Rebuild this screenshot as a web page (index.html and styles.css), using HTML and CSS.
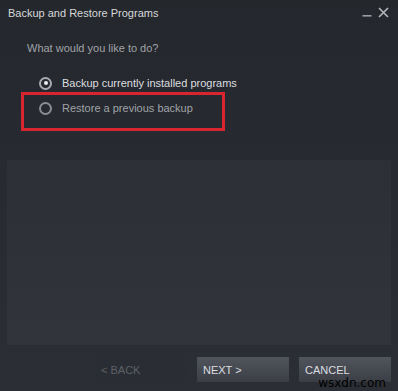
FILE: index.html
```
<!DOCTYPE html>
<html>
<head>
<meta charset="utf-8">
<link rel="stylesheet" href="styles.css">
</head>
<body>
<div class="win">
  <div class="titlebar">
    <span class="title">Backup and Restore Programs</span>
    <div class="controls">
      <svg class="ctl" width="10" height="10" viewBox="0 0 10 10"><rect x="0.5" y="7" width="9" height="1.6" fill="#9a9da2"/></svg>
      <svg class="ctl" width="11" height="11" viewBox="0 0 11 11"><path d="M1 1 L10 10 M10 1 L1 10" stroke="#b4b7bb" stroke-width="1.6"/></svg>
    </div>
  </div>
  <div class="question">What would you like to do?</div>
  <div class="options">
    <label class="opt">
      <span class="radio on"></span>
      <span class="label bright">Backup currently installed programs</span>
    </label>
    <label class="opt highlight">
      <span class="radio"></span>
      <span class="label">Restore a previous backup</span>
    </label>
  </div>
  <div class="panel"></div>
  <div class="buttons">
    <div class="btn disabled">&lt; BACK</div>
    <div class="btn primary">NEXT &gt;</div>
    <div class="btn">CANCEL</div>
  </div>
  <div class="watermark">wsxdn.com</div>
</div>
</body>
</html>
```
FILE: styles.css
```
html, body {
  margin: 0;
  padding: 0;
}
body {
  width: 398px;
  height: 391px;
  overflow: hidden;
  font-family: "Liberation Sans", Arial, sans-serif;
}
.win {
  position: relative;
  width: 398px;
  height: 391px;
  background: linear-gradient(to bottom, #24272c 0%, #272a30 40%, #2b2e34 100%);
  display: flex;
  flex-direction: column;
}
.titlebar {
  height: 25px;
  display: flex;
  align-items: center;
  justify-content: space-between;
  padding: 0 9px 0 8px;
}
.title {
  color: #d6d8da;
  font-size: 11px;
  padding-top: 1px;
}
.controls {
  display: flex;
  align-items: center;
  gap: 6px;
}
.ctl {
  display: block;
}
.question {
  margin: 17px 0 0 27px;
  color: #a0a3a8;
  font-size: 11px;
  height: 13px;
}
.options {
  margin: 17px 0 0 21px;
  display: flex;
  flex-direction: column;
  width: 204px;
}
.opt {
  display: flex;
  align-items: center;
  height: 22px;
  padding-left: 18px;
}
.highlight {
  border: 3px solid #d8252f;
  height: 39px;
  box-sizing: border-box;
  padding-left: 15px;
  padding-bottom: 7px;
  margin-top: -2px;
}
.radio {
  width: 13px;
  height: 13px;
  border: 2px solid #8a8d92;
  border-radius: 50%;
  box-sizing: border-box;
  flex: none;
  position: relative;
  margin-right: 10px;
}
.radio.on {
  border-color: #a8abb0;
}
.radio.on::after {
  content: "";
  position: absolute;
  left: 2.5px;
  top: 2.5px;
  width: 4px;
  height: 4px;
  border-radius: 50%;
  background: #eceef0;
}
.label {
  color: #a0a3a8;
  font-size: 11px;
  white-space: nowrap;
}
.label.bright {
  color: #dcdee0;
}
.panel {
  margin: 29px 7px 0 7px;
  height: 185px;
  background: linear-gradient(to bottom, #2c2f35, #31343a);
}
.buttons {
  display: flex;
  justify-content: flex-end;
  gap: 10px;
  margin: 12px 7px 0 0;
}
.btn {
  width: 92px;
  height: 25px;
  box-sizing: border-box;
  padding-left: 6px;
  display: flex;
  align-items: center;
  font-size: 11px;
  color: #dcdee0;
  background: linear-gradient(to bottom, #50545c, #3b3e45);
}
.btn.disabled {
  background: #2a2d33;
  color: #5d6168;
}
.watermark {
  position: absolute;
  right: 12px;
  bottom: 1px;
  font-family: "DejaVu Sans", sans-serif;
  font-size: 12px;
  line-height: 13px;
  color: #000;
}
```
